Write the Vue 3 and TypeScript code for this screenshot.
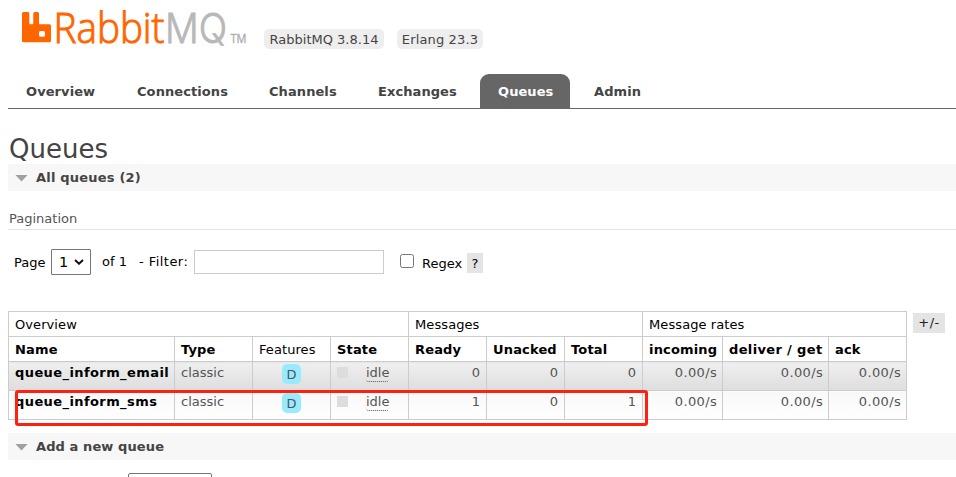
<script setup lang="ts">
import { ref } from 'vue'

interface Tab { label: string; width: number; active?: boolean }
interface Queue { name: string; type: string; state: string; counts: number[]; rates: string[] }

const tabs: Tab[] = [
  { label: 'Overview', width: 111 },
  { label: 'Connections', width: 132 },
  { label: 'Channels', width: 109 },
  { label: 'Exchanges', width: 120 },
  { label: 'Queues', width: 90, active: true },
  { label: 'Admin', width: 90 },
]
const columns: number[] = [166, 78, 78, 78, 78, 78, 78, 80, 106, 78]
const queues: Queue[] = [
  { name: 'queue_inform_email', type: 'classic', state: 'idle', counts: [0, 0, 0], rates: ['0.00/s', '0.00/s', '0.00/s'] },
  { name: 'queue_inform_sms', type: 'classic', state: 'idle', counts: [1, 0, 1], rates: ['0.00/s', '0.00/s', '0.00/s'] },
]
const filter = ref<string>('')
const regex = ref<boolean>(false)
</script>

<template>
  <div class="page">
    <header class="header">
      <svg class="logo" width="226" height="65" viewBox="0 -9 226 65" role="img" aria-label="RabbitMQ">
        <path fill="#f60" d="M1.500 3h4.500Q7.300 3 7.300 4.500V14q0 1.300 1 1.300h2q1 0 1-1.300V4.500Q11.300 3 12.800 3h2.700q1.500 0 1.500 1.500V14q0 1.300 1 1.300h9.500q1.500 0 1.500 1.500v15q0 1.500-1.500 1.500h-26Q0 33.300 0 31.800v-27.300Q0 3 1.500 3zM18.500 22q-1.500 0-1.500 1.500v2.700q0 1.500 1.500 1.500h3q1.500 0 1.500-1.500v-2.700q0-1.500-1.500-1.500z" fill-rule="evenodd" />
        <text x="31.500" y="33.500" class="word orange" textLength="111" lengthAdjust="spacingAndGlyphs">Rabbit</text>
        <text x="143" y="33.500" class="word grey" textLength="62" lengthAdjust="spacingAndGlyphs">MQ</text>
        <text x="208.500" y="33.500" class="tm" textLength="16" lengthAdjust="spacingAndGlyphs">TM</text>
      </svg>
      <span class="version v1">RabbitMQ 3.8.14</span>
      <span class="version v2">Erlang 23.3</span>
    </header>
    <nav class="tabs">
      <a v-for="tab in tabs" :key="tab.label" :class="{ active: tab.active }" :style="{ width: tab.width + 'px' }"><span>{{ tab.label }}</span></a>
    </nav>
    <main>
      <h1>Queues</h1>
      <h2 class="all"><i class="arrow"></i><span>All queues (2)</span></h2>
      <h3>Pagination</h3>
      <div class="controls">
        <span class="page-label">Page</span>
        <span class="select">1
          <svg width="10" height="6" viewBox="0 0 10 6"><path d="M1 1l4 3.700L9 1" fill="none" stroke="#111" stroke-width="2" /></svg>
        </span>
        <span class="of">of 1</span>
        <span class="filter-label">- Filter:</span>
        <input v-model="filter" class="filter" type="text">
        <input v-model="regex" class="regex" type="checkbox">
        <span class="regex-label">Regex</span>
        <span class="help">?</span>
      </div>
      <div class="table-wrap">
        <table>
          <colgroup><col v-for="(w, i) in columns" :key="i" :style="{ width: w + 'px' }"></colgroup>
          <thead>
            <tr><th class="plain" colspan="4">Overview</th><th class="plain" colspan="3">Messages</th><th class="plain" colspan="3">Message rates</th></tr>
            <tr>
              <th>Name</th><th>Type</th><th class="plain">Features</th><th>State</th>
              <th>Ready</th><th>Unacked</th><th>Total</th>
              <th>incoming</th><th class="deliver">deliver / get</th><th>ack</th>
            </tr>
          </thead>
          <tbody>
            <tr v-for="(q, i) in queues" :key="q.name" :class="i % 2 ? 'light' : 'dark'">
              <td class="name">{{ q.name }}</td>
              <td class="type">{{ q.type }}</td>
              <td class="feature"><span class="badge">D</span></td>
              <td><div class="state"><i></i><span>{{ q.state }}</span></div></td>
              <td v-for="(c, n) in q.counts" :key="'c' + n" class="num">{{ c }}</td>
              <td v-for="(r, n) in q.rates" :key="'r' + n" class="num rate">{{ r }}</td>
            </tr>
          </tbody>
        </table>
        <span class="toggle">+/-</span>
        <div class="highlight"></div>
      </div>
      <h2 class="add"><i class="arrow"></i><span>Add a new queue</span></h2>
      <div class="new-select"></div>
    </main>
  </div>
</template>

<style>
body { background: #fff; }
</style>

<style scoped>
* { box-sizing: border-box; }
.page { height: 477px; overflow: hidden; padding-left: 8px; font: 13px/17px Verdana, "DejaVu Sans", sans-serif; color: #444; white-space: nowrap; }
.header { display: flex; align-items: flex-start; height: 74px; padding-left: 14px; }
.logo { flex: none; }
.word { font: 300 42px "Open Sans", sans-serif; }
.orange { fill: #f60; stroke: #f60; stroke-width: 1px; }
.grey { font: 300 41px Inter, sans-serif; fill: #b8b8b8; stroke: #b8b8b8; stroke-width: .8px; }
.tm { font: 12px "Open Sans", sans-serif; fill: #aaa; stroke: #aaa; stroke-width: .3px; }
.version { height: 20px; margin-top: 29px; border-radius: 5px; background: #eee; line-height: 21px; text-align: center; }
.v1 { width: 120px; margin-left: 16px; }
.v2 { width: 86px; margin-left: 13px; letter-spacing: .15px; }
.tabs { display: flex; height: 35px; border-bottom: 1px solid #666; font-weight: bold; letter-spacing: .08px; }
.tabs a { height: 34px; padding-left: 18px; line-height: 35px; }
.tabs a:last-child { padding-left: 24px; }
.tabs .active { border-radius: 9px 9px 0 0; background: #666; color: #fff; }
h1 { height: 55px; margin: 0; padding: 24px 0 0 1px; font-size: 26px; line-height: 32px; font-weight: normal; }
h2 { display: flex; align-items: center; height: 27px; margin: 0; padding-left: 7px; background: #f7f7f7; font-size: 13px; line-height: 27px; }
.all { letter-spacing: .2px; }
.add { letter-spacing: .1px; }
.arrow { width: 13px; height: 7px; margin: 1px 8px 0 0; background: #a0a0a0; clip-path: polygon(0 0, 100% 0, 50% 100%); }
h3 { height: 39px; margin: 0; padding: 19px 0 0 1px; border-bottom: 1px solid #e4e4e4; font-size: 13px; line-height: 17px; font-weight: normal; color: #555; }
.controls { display: flex; align-items: flex-start; height: 81px; padding: 19px 0 0 6px; color: #000; }
.page-label { width: 37px; padding-top: 5px; }
.select { display: flex; align-items: center; justify-content: space-between; width: 40px; height: 26px; padding: 0 6px 0 7px; border: 1px solid #767676; border-radius: 1px; font-size: 14.500px; }
.of { width: 37px; margin-left: 11px; padding-top: 4px; }
.filter-label { width: 55px; padding-top: 4px; letter-spacing: .45px; }
.filter { width: 190px; height: 24px; margin: 1px 0 0; padding: 2px; border: 1px solid #ccc; background: #fff; }
.regex { width: 14px; height: 14px; margin: 5px 0 0 16px; appearance: none; border: 1px solid #767676; border-radius: 2.500px; }
.regex-label { width: 46px; margin-left: 7px; padding: 6px 0 0 1px; }
.help { width: 16px; height: 20px; margin-top: 4px; background: #e4e4e4; line-height: 21px; text-align: center; }
.table-wrap { position: relative; display: flex; align-items: flex-start; height: 122px; }
table { width: 899px; border-collapse: collapse; table-layout: fixed; }
th, td { height: 25px; padding: 0 6px; border: 1px solid #ccc; text-align: left; color: #000; }
th { padding-top: 1px; font-weight: bold; line-height: 23px; letter-spacing: .15px; }
th.plain { font-weight: normal; letter-spacing: .08px; }
th.deliver { letter-spacing: .35px; }
td { height: 29px; padding-top: 2px; vertical-align: top; line-height: 17px; color: #555; }
.dark td { background: linear-gradient(#efefef, #dedede); }
.light td { background: linear-gradient(#f8f8f8, #fff); }
td.name { font-weight: bold; color: #000; letter-spacing: .41px; }
td.feature { padding: 2px 0 0; text-align: center; }
.badge { display: inline-block; width: 19px; height: 20px; border-radius: 5px; background: #98ebff; line-height: 21px; }
.state { display: flex; }
.state i { width: 11px; height: 11px; margin: 3px 18px 0 0; background: #ddd; }
.state span { height: 18px; border-bottom: 1px dotted #555; border-radius: 3px; }
.num { text-align: right; }
td.rate { padding-right: 5px; letter-spacing: .35px; }
.toggle { width: 32px; height: 20px; margin: 2px 0 0 6px; background: #e4e4e4; color: #222; line-height: 20px; letter-spacing: .5px; text-align: center; }
.highlight { position: absolute; left: 7px; top: 79px; width: 633px; height: 36px; border: 3px solid #ff2010; border-radius: 3px; }
.new-select { width: 84px; height: 26px; margin: 13px 0 0 120px; border: 1px solid #767676; border-radius: 2px; }
</style>
